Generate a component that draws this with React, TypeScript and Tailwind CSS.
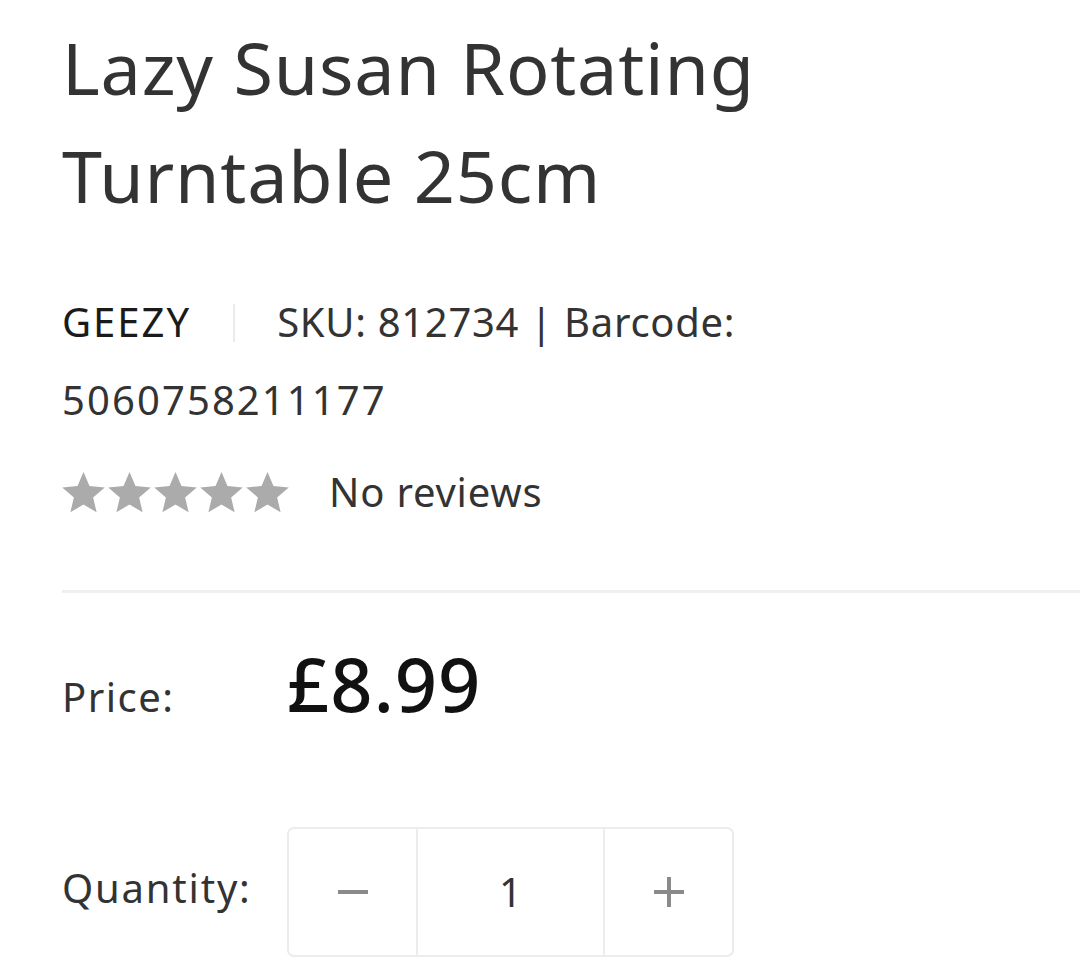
import React from "react";

function Star() {
  return (
    <svg viewBox="2 2 20 19.3" width="43" height="41" className="block">
      <path
        d="M12 17.27L18.18 21l-1.64-7.03L22 9.24l-7.19-.61L12 2 9.19 8.63 2 9.24l5.46 4.73L5.82 21z"
        fill="#ababab"
      />
    </svg>
  );
}

export default function App() {
  return (
    <div
      className="w-[1080px] h-[965px] overflow-hidden bg-white pl-[62px] pt-[13px]"
      style={{ fontFamily: "'Noto Sans', Lato, sans-serif" }}
    >
      <h1 className="text-[72px] leading-[108px] tracking-[0.8px] text-[#333] font-normal">
        Lazy Susan Rotating
        <br />
        Turntable 25cm
      </h1>

      <div className="mt-[54px] text-[40px] leading-[78px] text-[#333]">
        <span className="text-[#1a1a1a] tracking-[2px]">GEEZY</span>
        <span className="inline-block align-middle w-[2px] h-[38px] bg-[#ebebeb] mx-[42px] -mt-[6px]" />
        <span className="tracking-[0.7px]">SKU: 812734 | Barcode:</span>
        <br />
        <span className="tracking-[2.1px]">5060758211177</span>
      </div>

      <div className="mt-[14px] flex items-center h-[78px]">
        <div className="flex items-center gap-[3px]">
          <Star />
          <Star />
          <Star />
          <Star />
          <Star />
        </div>
        <span className="ml-[40px] text-[40px] leading-[78px] tracking-[0.8px] text-[#333]">No reviews</span>
      </div>

      <div className="mt-[59px] h-[3px] bg-[#efefef]" />

      <div className="mt-[35px] flex items-baseline">
        <span className="w-[225px] text-[40px] tracking-[1.5px] text-[#333]">Price:</span>
        <span className="text-[74px] font-medium tracking-[1px] text-[#111]">£8.99</span>
      </div>

      <div className="mt-[88px] flex items-center">
        <span className="w-[225px] pb-[8px] text-[40px] tracking-[1.8px] text-[#333]">Quantity:</span>
        <div className="flex h-[130px] border-2 border-[#ececec] rounded-[7px] overflow-hidden">
          <div className="w-[127px] flex items-center justify-center">
            <span className="block w-[30px] h-[4px] bg-[#8a8a8a]" />
          </div>
          <div className="w-[189px] flex items-center justify-center border-x-2 border-[#ececec] text-[40px] text-[#333]">
            1
          </div>
          <div className="w-[127px] flex items-center justify-center">
            <span className="relative block w-[30px] h-[30px]">
              <span className="absolute left-0 top-[13px] w-[30px] h-[4px] bg-[#8a8a8a]" />
              <span className="absolute top-0 left-[13px] w-[4px] h-[30px] bg-[#8a8a8a]" />
            </span>
          </div>
        </div>
      </div>
    </div>
  );
}
